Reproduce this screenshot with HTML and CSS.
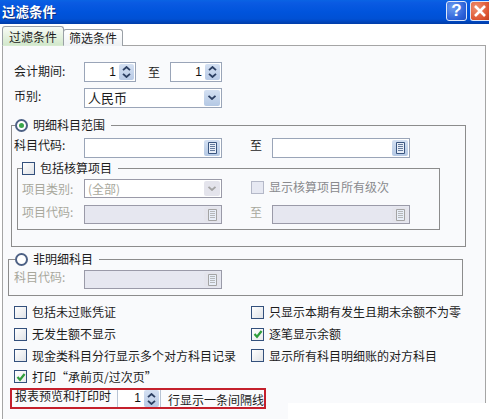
FILE: index.html
```html
<!DOCTYPE html>
<html lang="zh">
<head>
<meta charset="utf-8">
<title>过滤条件</title>
<link rel="stylesheet" href="styles.css">
</head>
<body>
<svg class="defs" width="0" height="0" aria-hidden="true">
  <symbol id="chev-up" viewBox="0 0 9 5"><path d="M1 4.2 4.5 1 8 4.2" fill="none" stroke="currentColor" stroke-width="1.8"/></symbol>
  <symbol id="chev-down" viewBox="0 0 9 5"><path d="M1 .8 4.5 4 8 .8" fill="none" stroke="currentColor" stroke-width="1.8"/></symbol>
  <symbol id="doc" viewBox="0 0 9 12"><path d="M.5.5h8v11h-8z" fill="#e8eef8" stroke="currentColor"/><path d="M2 2.5h5M2 4.5h5M2 6.5h5M2 8.5h5" stroke="currentColor" stroke-opacity=".75" fill="none"/></symbol>
</svg>
<div class="dialog">
  <header class="titlebar">
    <span class="title">过滤条件</span>
    <div class="winbtns">
      <span class="winbtn help">?</span>
      <span class="winbtn close">
        <svg width="14" height="14" viewBox="0 0 14 14"><path d="M2 2 12 12M12 2 2 12" stroke="#fff" stroke-width="2.6"/></svg>
      </span>
    </div>
  </header>
  <nav class="tabs">
    <span class="tab active">过滤条件</span>
    <span class="tab">筛选条件</span>
  </nav>
  <main class="panel">
    <div class="row period">
      <span class="label">会计期间:</span>
      <div class="spin short"><span class="val">1</span><span class="spinbtn"><svg class="c"><use href="#chev-up"/></svg><svg class="c"><use href="#chev-down"/></svg></span></div>
      <span class="to">至</span>
      <div class="spin short"><span class="val">1</span><span class="spinbtn"><svg class="c"><use href="#chev-up"/></svg><svg class="c"><use href="#chev-down"/></svg></span></div>
    </div>
    <div class="row currency">
      <span class="label">币别:</span>
      <div class="field select"><span class="text">人民币</span><span class="btn"><svg class="c"><use href="#chev-down"/></svg></span></div>
    </div>

    <fieldset class="group g-detail">
      <legend class="lg"><span class="radio on"></span><span>明细科目范围</span></legend>
      <div class="row code">
        <span class="label raised">科目代码:</span>
        <div class="field"><span class="text"></span><span class="btn"><svg class="d"><use href="#doc"/></svg></span></div>
        <span class="to2 raised">至</span>
        <div class="field"><span class="text"></span><span class="btn"><svg class="d"><use href="#doc"/></svg></span></div>
      </div>
      <fieldset class="group g-item">
        <legend class="lg"><span class="check"></span><span>包括核算项目</span></legend>
        <div class="row dim">
          <span class="label in level">项目类别:</span>
          <div class="field select off-sel"><span class="text">(全部)</span><span class="btn"><svg class="c"><use href="#chev-down"/></svg></span></div>
          <span class="check off"></span><span class="chk-text">显示核算项目所有级次</span>
        </div>
        <div class="row dim second">
          <span class="label in raised">项目代码:</span>
          <div class="field off"><span class="text"></span><span class="btn"><svg class="d"><use href="#doc"/></svg></span></div>
          <span class="to3 raised">至</span>
          <div class="field off"><span class="text"></span><span class="btn"><svg class="d"><use href="#doc"/></svg></span></div>
        </div>
      </fieldset>
    </fieldset>

    <fieldset class="group g-other">
      <legend class="lg"><span class="radio"></span><span>非明细科目</span></legend>
      <div class="row dim">
        <span class="label in2 raised">科目代码:</span>
        <div class="field off"><span class="text"></span><span class="btn"><svg class="d"><use href="#doc"/></svg></span></div>
      </div>
    </fieldset>

    <div class="options">
      <label class="opt"><span class="check"></span>包括未过账凭证</label>
      <label class="opt"><span class="check"></span>只显示本期有发生且期末余额不为零</label>
      <label class="opt"><span class="check"></span>无发生额不显示</label>
      <label class="opt"><span class="check ticked"><svg width="10" height="10" viewBox="0 0 10 10"><path d="M1.5 5 4 7.8 8.6 2" fill="none" stroke="#2f9e3c" stroke-width="2.2"/></svg></span>逐笔显示余额</label>
      <label class="opt"><span class="check"></span>现金类科目分行显示多个对方科目记录</label>
      <label class="opt"><span class="check"></span>显示所有科目明细账的对方科目</label>
      <label class="opt"><span class="check ticked"><svg width="10" height="10" viewBox="0 0 10 10"><path d="M1.5 5 4 7.8 8.6 2" fill="none" stroke="#2f9e3c" stroke-width="2.2"/></svg></span>打印“承前页/过次页”</label>
    </div>

    <div class="redbox">
      <span class="rb-label">报表预览和打印时</span>
      <div class="rb-spin"><span class="val">1</span><span class="spinbtn"><svg class="c"><use href="#chev-up"/></svg><svg class="c"><use href="#chev-down"/></svg></span></div>
      <span class="rb-after">行显示一条间隔线</span>
    </div>
  </main>
  <div class="cutout"></div>
</div>
</body>
</html>
```
FILE: styles.css
```css
* { box-sizing: border-box; }
html, body { margin: 0; padding: 0; }
body {
  width: 489px; height: 419px; overflow: hidden; background: #fff;
  font: 12px/16px "Noto Sans CJK SC", "Liberation Sans", sans-serif; color: #1c1c1c;
}
.defs { position: absolute; }
.dialog { position: relative; width: 489px; height: 419px; display: flex; flex-direction: column; }

.titlebar {
  height: 24px; flex: none; display: flex; align-items: flex-start; justify-content: space-between;
  background: linear-gradient(#0a63e4 0, #0a5ae2 3px, #0054dc 12px, #0050d4 19px, #0040b0 23px, #003ca8 24px);
}
.title { padding: 2px 0 0 2px; color: #fff; font-size: 13.5px; line-height: 18px; font-weight: 700; text-shadow: 1px 1px 0 #0a2f80; }
.winbtns { display: flex; gap: 3px; padding-top: 1px; }
.winbtn { height: 20px; border: 1px solid #dfe8f8; border-radius: 3px; display: flex; align-items: center; justify-content: center; }
.help { width: 21px; background: radial-gradient(circle at 30% 30%, #6b9cf0, #2a5fd8 70%, #2050c0); color: #fff; font: 700 17px/18px "Liberation Sans", sans-serif; }
.close { width: 19px; border-right: 0; border-radius: 3px 0 0 3px; background: radial-gradient(circle at 30% 30%, #f09070, #dc5430 70%, #c04020); }

.tabs { height: 22px; flex: none; display: flex; align-items: flex-end; padding-left: 2px; position: relative; z-index: 1; margin-bottom: -1px; }
.tab {
  width: 60px; height: 17px; margin-left: -1px; padding: 0 0 0 5px; background: linear-gradient(#fff, #eef1f4);
  border: 1px solid #9aa0a6; border-bottom: 0; border-radius: 3px 3px 0 0; line-height: 16px;
}
.tab.active { width: 62px; height: 20px; margin-left: 0; padding: 2px 0 0 6px; background: linear-gradient(#f8fbf6, #e2f0dc 60%, #d2e8cc); z-index: 1; border-bottom: 1px solid #d8ecd2; }

.panel {
  flex: 1; margin: 0 3px 0 2px; background: #f9fafc; border: 1px solid #a5a5a5; border-bottom: 0;
  padding: 16px 0 0 5px;
}
.row { display: flex; align-items: center; }
.label { flex: none; width: 76px; padding-left: 6px; margin-top: -3px; }
.label.raised, .raised { margin-top: -6px; }
.label.level { margin-top: 0; }
.period { height: 20px; }
.currency { height: 19px; margin-top: 6px; }
.to { width: 34px; padding-left: 12px; }

.spin, .field, .rb-spin { display: flex; align-items: stretch; }
.spin { height: 20px; background: #fff; border: 1px solid #9aa5b8; }
.short { width: 52px; }
.val { flex: 1; text-align: right; padding-right: 2px; color: #111; font: 12px/18px "Liberation Sans", sans-serif; }
.spinbtn {
  width: 15px; margin: 1px; flex: none; display: flex; flex-direction: column; align-items: center; justify-content: center; gap: 2px;
  background: linear-gradient(#d4e0f2, #b8cae6); border-radius: 2px; color: #2c3f62;
}
.c { width: 9px; height: 5px; display: block; }
.d { width: 9px; height: 12px; display: block; color: #3a5680; }

.field { width: 138px; height: 20px; background: #fff; border: 1px solid #9aa5b8; flex: none; }
.field .text { flex: 1; padding-left: 3px; line-height: 17px; font-size: 13px; }
.field .btn {
  width: 16px; margin: 1px; flex: none; display: flex; align-items: center; justify-content: center;
  background: linear-gradient(#d4e0f2, #b4c8e4); border-radius: 2px; color: #2c3f62;
}
.select .c { width: 10px; }

.group { margin: 0; padding: 0; min-width: 0; border: 1px solid #8c8c8c; }
.lg { padding: 0 6px 0 0; margin-left: 3px; display: flex; align-items: center; gap: 5px; height: 14px; }
.radio { width: 13px; height: 13px; border-radius: 50%; border: 2px solid #4d6185; background: #fff; display: flex; align-items: center; justify-content: center; flex: none; }
.radio.on::after { content: ""; width: 5px; height: 5px; border-radius: 50%; background: #3aa64a; }
.check { flex: none; width: 13px; height: 13px; border: 1px solid #33507c; background: linear-gradient(135deg, #fff, #dfe2e6); display: inline-flex; align-items: center; justify-content: center; }
.check.off { border-color: #b4b8c8; background: #e6e8f2; }
.check.ticked { background: linear-gradient(135deg, #fff, #e8eaec); }

.g-detail { margin: 11px 0 0 3px; width: 455px; height: 129px; padding: 6px 0 0; }
.g-detail > .code { height: 20px; }
.g-detail > .code .label { width: 72px; padding-left: 2px; }
.to2 { width: 50px; padding-left: 28px; }
.g-item { margin: 3px 0 0 5px; width: 423px; height: 69px; padding: 4px 0 0; }
.g-item > .lg { margin-left: 4px; }
.dim { color: #a8a89c; }
.g-item .label.in { width: 66px; padding-left: 4px; }
.g-item .second { margin-top: 7px; }
.g-item .field { height: 19px; }
.g-item .check.off { margin-left: 29px; margin-top: -2px; }
.chk-text { margin-left: 5px; margin-top: -3px; color: #8a8a8e; }
.to3 { width: 50px; padding-left: 28px; }
.off { background: #e6e7f0; border-color: #9a9aa8; }
.off .btn, .off-sel .btn { background: #e4e4ec; }
.off .d, .off-sel .c { color: #a4a4a4; }
.off-sel { border-color: #9a9aa8; }
.off-sel .text { color: #a8a89c; font-size: 12px; }

.g-other { margin: 5px 0 0; width: 455px; height: 44px; padding: 4px 0 0; }
.g-other > .lg { margin-left: 6px; }
.g-other .field { height: 19px; }
.g-other .label.in2 { width: 75px; padding-left: 5px; }

.options { margin: 5px 0 0 6px; display: grid; grid-template-columns: 237px 1fr; grid-template-rows: 22px 22px 21px 21px; width: 455px; }
.opt { display: flex; align-items: center; gap: 5px; }

.redbox {
  margin: 1px 0 0 2px; width: 256px; height: 21px; border: 2px solid #c4202c; display: flex; align-items: center; background: #fafbfd;
}
.rb-label { width: 105px; padding-left: 3px; flex: none; margin-top: -5px; }
.rb-spin { width: 44px; height: 17px; flex: none; border-left: 1px solid #b8c4d4; border-right: 1px solid #b8c4d4; background: #fff; }
.rb-spin .val { line-height: 17px; }
.rb-spin .spinbtn { margin: 0 1px; }
.rb-after { padding-left: 7px; margin-top: 3px; white-space: nowrap; }

.cutout { position: absolute; left: 288px; top: 403px; right: 0; bottom: 0; background: #fff; }
```
